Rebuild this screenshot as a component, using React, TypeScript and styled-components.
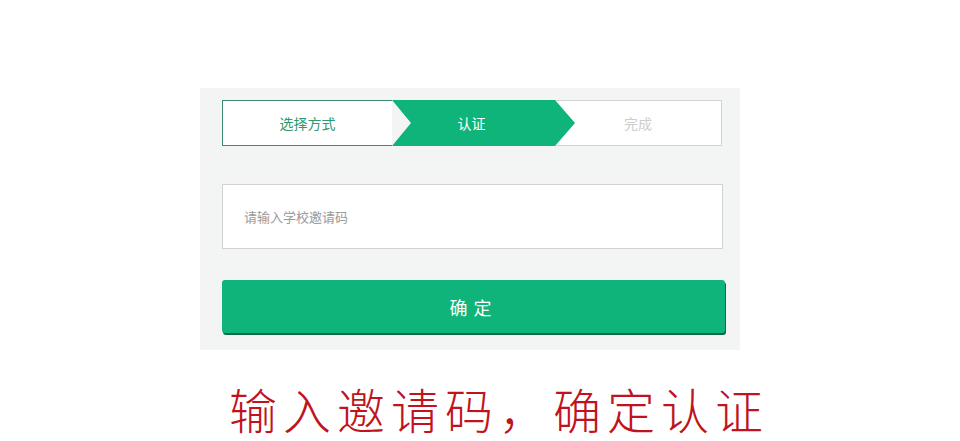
import styled, { createGlobalStyle } from 'styled-components';

const GlobalStyle = createGlobalStyle`
  html, body {
    margin: 0;
    padding: 0;
    background: #ffffff;
    font-family: 'Noto Sans CJK SC', 'Noto Sans', sans-serif;
  }
`;

const Page = styled.div`
  width: 960px;
  height: 441px;
  padding-top: 88px;
  box-sizing: border-box;
  overflow: hidden;
`;

const Panel = styled.div`
  margin-left: 200px;
  width: 540px;
  height: 262px;
  box-sizing: border-box;
  background: #f3f4f4;
  padding: 12px 15px 0 22px;
`;

const Steps = styled.div`
  display: flex;
  width: 500px;
  height: 46px;
`;

const Step = styled.div<{ state: 'done' | 'active' | 'todo' }>`
  display: flex;
  align-items: center;
  justify-content: center;
  box-sizing: border-box;
  font-size: 14px;
  position: relative;
  ${(p) =>
    p.state === 'done' &&
    `
    width: 170px;
    background: #ffffff;
    color: #2b9a70;
    border: 1px solid #3d8a6c;
    border-right: none;
  `}
  ${(p) =>
    p.state === 'active' &&
    `
    width: 183px;
    margin-right: -20px;
    padding-right: 24px;
    z-index: 1;
    background: #0fb47a;
    color: #ffffff;
    clip-path: polygon(0 0, calc(100% - 20px) 0, 100% 50%, calc(100% - 20px) 100%, 0 100%, 19px 50%);
  `}
  ${(p) =>
    p.state === 'todo' &&
    `
    flex: 1;
    background: #ffffff;
    color: #cdcdcd;
    border: 1px solid #d3d3d3;
    border-left: none;
  `}
`;

const CodeInput = styled.input`
  display: block;
  margin-top: 38px;
  width: 501px;
  height: 65px;
  box-sizing: border-box;
  border: 1px solid #d2d2d2;
  background: #ffffff;
  padding: 0 21px;
  font-family: 'Noto Sans CJK SC', sans-serif;
  font-size: 13px;
  outline: none;

  &::placeholder {
    color: #9a9a9a;
  }
`;

const SubmitButton = styled.button`
  display: block;
  margin-top: 31px;
  width: 503px;
  height: 53px;
  border: none;
  border-radius: 3px;
  background: #0fb47a;
  box-shadow: 1px 2px 0 #0b6b48;
  color: #ffffff;
  font-family: 'Noto Sans CJK SC', sans-serif;
  font-size: 18px;
  letter-spacing: 6px;
  padding-left: 6px;
  cursor: pointer;
`;

const Caption = styled.div`
  margin-top: 33px;
  padding-left: 229px;
  color: #bf1420;
  font-family: 'Noto Sans CJK SC', sans-serif;
  font-weight: 300;
  font-size: 48px;
  line-height: 50px;
  letter-spacing: 6px;
  white-space: nowrap;
`;

export default function App() {
  return (
    <>
      <GlobalStyle />
      <Page>
        <Panel>
          <Steps>
            <Step state="done">选择方式</Step>
            <Step state="active">认证</Step>
            <Step state="todo">完成</Step>
          </Steps>
          <CodeInput placeholder="请输入学校邀请码" />
          <SubmitButton>确定</SubmitButton>
        </Panel>
        <Caption>输入邀请码，确定认证</Caption>
      </Page>
    </>
  );
}
